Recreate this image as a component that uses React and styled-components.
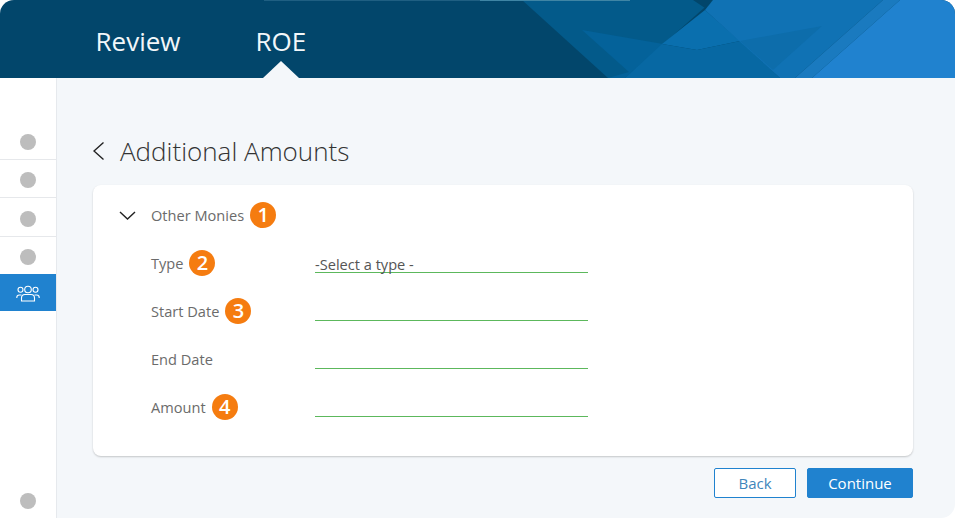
import React from "react";
import styled, { createGlobalStyle } from "styled-components";

const GlobalStyle = createGlobalStyle`
  html, body {
    margin: 0;
    padding: 0;
    background: #fff;
  }
  * {
    box-sizing: border-box;
  }
  body {
    font-family: "Open Sans", "Liberation Sans", sans-serif;
  }
`;

const Page = styled.div`
  width: 955px;
  height: 518px;
  display: flex;
  flex-direction: column;
  overflow: hidden;
  background: #fff;
`;

const Header = styled.header`
  position: relative;
  height: 78px;
  flex: none;
  display: flex;
  gap: 75px;
  padding: 0 0 0 95.5px;
  background: #02466b;
  border-radius: 14px 14px 0 0;
  overflow: hidden;
`;

const HeaderArt = styled.svg`
  position: absolute;
  left: 0;
  top: 0;
`;

const Tab = styled.div`
  position: relative;
  height: 78px;
  padding-top: 23px;
  font-size: 26px;
  line-height: 36px;
  color: #f2f7fa;
  &::after {
    content: "";
    display: ${(p) => (p.$active ? "block" : "none")};
    position: absolute;
    left: 50%;
    bottom: 0;
    margin-left: -18px;
    border-left: 18px solid transparent;
    border-right: 18px solid transparent;
    border-bottom: 17px solid #f4f7fa;
  }
`;

const Body = styled.div`
  flex: 1;
  display: flex;
  min-height: 0;
`;

const Sidebar = styled.nav`
  width: 57px;
  flex: none;
  display: flex;
  flex-direction: column;
  padding-top: 44px;
  border-right: 1px solid #e6e9ed;
`;

const SideRow = styled.div`
  height: ${(p) => p.$h || 38}px;
  padding-top: ${(p) => (p.$active ? 0 : 3)}px;
  display: flex;
  align-items: center;
  justify-content: center;
  border-bottom: ${(p) => (p.$plain ? "none" : "1px solid #e6e8eb")};
  background: ${(p) => (p.$active ? "#2082cf" : "transparent")};
`;

const SideBottom = styled.div`
  margin-top: auto;
  height: 34px;
  display: flex;
  align-items: center;
  justify-content: center;
`;

const Dot = styled.span`
  width: 16px;
  height: 16px;
  border-radius: 50%;
  background: #bdbdbd;
`;

const Main = styled.main`
  flex: 1;
  display: flex;
  flex-direction: column;
  padding: 54px 42px 0 36px;
  background: #f4f7fa;
  border-bottom-right-radius: 14px;
`;

const TitleRow = styled.div`
  display: flex;
  align-items: center;
  gap: 16px;
  height: 38px;
`;

const Title = styled.h1`
  margin: 0;
  font-size: 26px;
  line-height: 38px;
  font-weight: 300;
  color: #333;
`;

const Card = styled.section`
  margin-top: 15px;
  height: 271px;
  padding: 17px 0 0 26px;
  background: #fff;
  border-radius: 8px;
  box-shadow: 0 1px 2px rgba(0, 0, 0, 0.2);
`;

const SectionHead = styled.div`
  display: flex;
  align-items: center;
  height: 26px;
  gap: 15px;
`;

const Label = styled.span`
  display: flex;
  align-items: center;
  gap: 6px;
  font-size: 14.6px;
  color: #6b6b6b;
`;

const Badge = styled.span`
  width: 26px;
  height: 26px;
  border-radius: 50%;
  display: flex;
  align-items: center;
  justify-content: center;
  background: #f57c10;
  color: #fff;
  font-size: 20px;
  font-weight: 600;
  line-height: 26px;
`;

const Field = styled.div`
  display: grid;
  grid-template-columns: 164px 273px;
  align-items: center;
  height: 48px;
  padding-left: 32px;
`;

const Fields = styled.div`
  margin-top: 11px;
`;

const Input = styled.div`
  height: 17px;
  margin-top: 3px;
  font-size: 14.6px;
  line-height: 16px;
  color: #555;
  border-bottom: 1px solid #5cb85c;
`;

const Actions = styled.div`
  display: flex;
  justify-content: flex-end;
  gap: 11px;
  margin-top: 12px;
`;

const Button = styled.button`
  width: ${(p) => (p.$primary ? "106px" : "82px")};
  height: 30px;
  padding: 0;
  font-family: inherit;
  font-size: 15px;
  border-radius: 2px;
  border: 1px solid #2082cf;
  background: ${(p) => (p.$primary ? "#2082cf" : "#fff")};
  color: ${(p) => (p.$primary ? "#fff" : "#3f86bb")};
`;

const fields = [
  { label: "Type", badge: 2, value: "-Select a type -" },
  { label: "Start Date", badge: 3 },
  { label: "End Date" },
  { label: "Amount", badge: 4 },
];

const Banner = () => (
  <HeaderArt width="955" height="78" viewBox="0 0 955 78">
    <polygon points="522,0 713,0 625,78 608,78" fill="#035a8a" />
    <polygon points="693,0 713,0 705,8" fill="#02466b" />
    <polygon points="582,30 663,44 625,78 608,78 629,72" fill="#04629a" />
    <polygon points="705,10 740,41 697,50 662,44" fill="#0a6fae" />
    <polygon points="662,44 697,50 740,41 780,78 625,78" fill="#0768a3" />
    <polygon points="713,0 883,0 795,78 780,78 705,10" fill="#1072b4" />
    <polygon points="740,41 822,26 773,70" fill="#0d6dab" />
    <polygon points="883,0 900,0 812,78 795,78" fill="#1a7abf" />
    <polygon points="900,0 955,0 955,78 812,78" fill="#2082cf" />
    <rect x="264" y="0" width="216" height="1" fill="#1f5f82" />
    <rect x="480" y="0" width="150" height="1" fill="#3f85a5" />
  </HeaderArt>
);

const PeopleIcon = () => (
  <svg width="24" height="18" viewBox="0 0 24 18" fill="none" stroke="#fff" strokeWidth="1.1">
    <circle cx="12" cy="5.500" r="3.300" />
    <circle cx="4.500" cy="5.800" r="2.500" />
    <circle cx="19.500" cy="5.800" r="2.500" />
    <path d="M5.500 17v-3c0-2 1.500-3.500 3.500-3.500h6c2 0 3.500 1.500 3.500 3.500v3z" />
    <path d="M.8 14v-.5c0-1.500 1-2.500 2.500-2.500h2.200" />
    <path d="M23.200 14v-.5c0-1.500-1-2.500-2.500-2.500h-2.200" />
  </svg>
);

const BackChevron = () => (
  <svg width="11" height="20" viewBox="0 0 11 20" fill="none" stroke="#222" strokeWidth="1.4">
    <path d="M10.500 1.500 1 10 10.500 18.500" />
  </svg>
);

const DownChevron = () => (
  <svg width="17" height="9" viewBox="0 0 17 9" fill="none" stroke="#222" strokeWidth="1.400">
    <path d="M1 1l7.500 7L16 1" />
  </svg>
);

const App = () => (
  <Page>
    <GlobalStyle />
    <Header>
      <Banner />
      <Tab>Review</Tab>
      <Tab $active>ROE</Tab>
    </Header>
    <Body>
      <Sidebar>
        <SideRow><Dot /></SideRow>
        <SideRow><Dot /></SideRow>
        <SideRow $h={39}><Dot /></SideRow>
        <SideRow $plain $h={37}><Dot /></SideRow>
        <SideRow $active $plain $h={37}><PeopleIcon /></SideRow>
        <SideBottom><Dot /></SideBottom>
      </Sidebar>
      <Main>
        <TitleRow>
          <BackChevron />
          <Title>Additional Amounts</Title>
        </TitleRow>
        <Card>
          <SectionHead>
            <DownChevron />
            <Label>Other Monies <Badge>1</Badge></Label>
          </SectionHead>
          <Fields>
            {fields.map((f) => (
              <Field key={f.label}>
                <Label>
                  {f.label}
                  {f.badge && <Badge>{f.badge}</Badge>}
                </Label>
                <Input>{f.value}</Input>
              </Field>
            ))}
          </Fields>
        </Card>
        <Actions>
          <Button>Back</Button>
          <Button $primary>Continue</Button>
        </Actions>
      </Main>
    </Body>
  </Page>
);

export default App;
